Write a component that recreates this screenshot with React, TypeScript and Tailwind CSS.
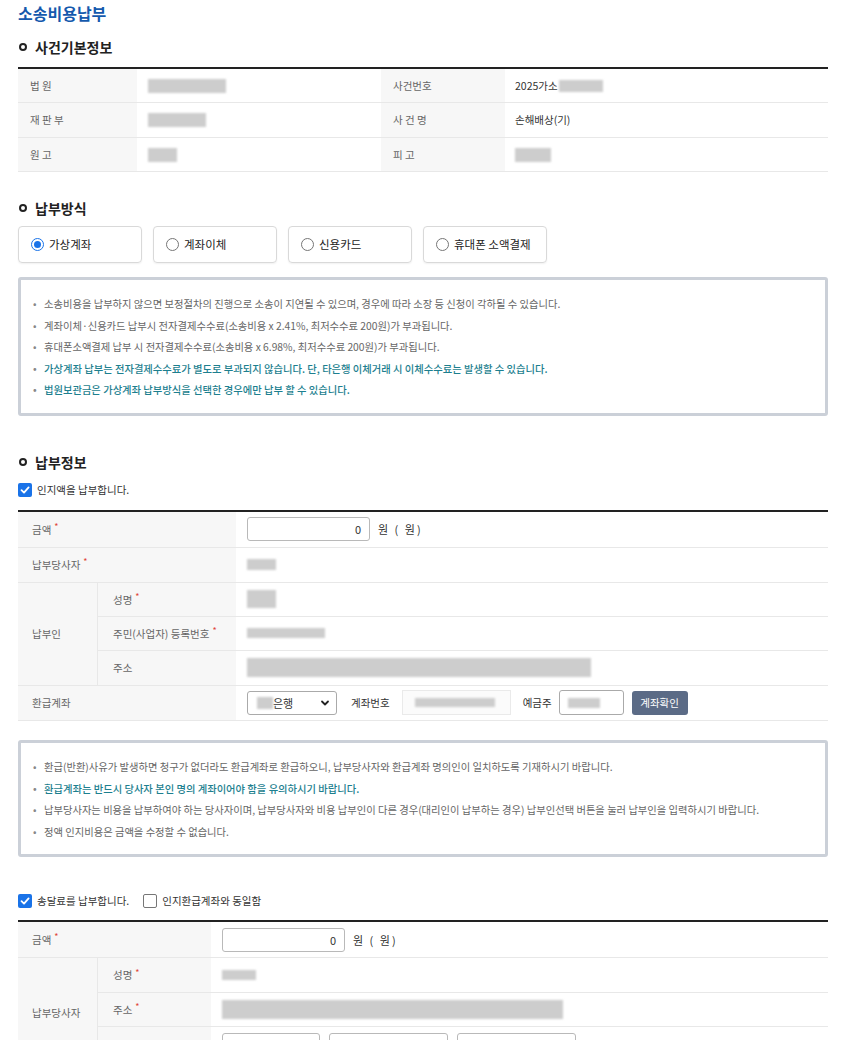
import React from "react";

const Blur = ({ w, h = 10, className = "" }: { w: number; h?: number; className?: string }) => (
  <span
    className={`inline-block bg-[#cdcdcd] blur-[1px] align-middle ${className}`}
    style={{ width: w, height: h }}
  />
);

const Heading = ({ children }: { children: React.ReactNode }) => (
  <h2 className="flex items-center gap-[8px] text-[14px] font-bold leading-[22px] text-[#222]">
    <span className="ml-[1px] h-[8px] w-[8px] rounded-full border-[2px] border-[#222]" />
    {children}
  </h2>
);

const Req = () => <span className="relative -top-[3px] ml-[3px] text-[9px] text-[#e0453a]">*</span>;

const Radio = ({ checked, label }: { checked?: boolean; label: string }) => (
  <label className="flex h-[37px] w-[124px] items-center gap-[5px] rounded-[4px] border border-[#d9d9d9] pl-[12px] text-[11.5px] text-[#222] shadow-[0_1px_2px_rgba(0,0,0,0.06)]">
    {checked ? (
      <span className="flex h-[13px] w-[13px] items-center justify-center rounded-full border border-[#1a73e8] bg-white">
        <span className="h-[7px] w-[7px] rounded-full bg-[#1a73e8]" />
      </span>
    ) : (
      <span className="h-[13px] w-[13px] rounded-full border border-[#767676] bg-white" />
    )}
    {label}
  </label>
);

const Check = ({ checked, label }: { checked?: boolean; label: string }) => (
  <label className="flex items-center gap-[5px] text-[10.5px] text-[#333]">
    {checked ? (
      <span className="flex h-[14px] w-[14px] items-center justify-center rounded-[2px] bg-[#1a73e8]">
        <svg width="10" height="10" viewBox="0 0 10 10" fill="none">
          <path d="M1.5 5.2 4 7.6 8.6 2.4" stroke="white" strokeWidth="1.8" strokeLinecap="round" strokeLinejoin="round" />
        </svg>
      </span>
    ) : (
      <span className="h-[14px] w-[14px] rounded-[2px] border border-[#767676] bg-white" />
    )}
    {label}
  </label>
);

const Notice = ({ lines }: { lines: { text: string; teal?: boolean }[] }) => (
  <div className="rounded-[3px] border-[3px] border-[#cbd0d8] pl-[12px] pt-[13px] pb-[12px]">
    {lines.map((l, i) => (
      <div
        key={i}
        className={`flex text-[10.3px] leading-[21.6px] ${l.teal ? "font-medium text-[#1d7f8f]" : "text-[#666]"}`}
      >
        <span className="w-[11px] text-[#888]">•</span>
        <span>{l.text}</span>
      </div>
    ))}
  </div>
);

const AmountInput = () => (
  <div className="flex items-center gap-[8px] text-[11px] text-[#333]">
    <div className="flex h-[24px] w-[123px] items-center justify-end rounded-[3px] border border-[#b9b9b9] pr-[8px] text-[11px]">
      0
    </div>
    <span className="tracking-[2px]">원 ( 원)</span>
  </div>
);

const lbl = "flex items-center border-b border-[#e8e8e8] bg-[#f7f7f7] text-[10.5px] text-[#666]";
const val = "flex items-center border-b border-[#e8e8e8] text-[10.5px] text-[#333]";

export default function App() {
  return (
    <div className="min-h-[1040px] w-[846px] bg-white px-[18px] pb-[40px] font-['Noto_Sans_CJK_KR','Noto_Sans',sans-serif]">
      <h1 className="pt-[1px] text-[16px] font-bold leading-[24px] text-[#1559ad]">소송비용납부</h1>

      <div className="mt-[11px]">
        <Heading>사건기본정보</Heading>
      </div>
      <div className="mt-[9px] border-t-[2px] border-[#222]">
        <div className="grid h-[34px] grid-cols-[119px_244px_124px_1fr]">
          <div className={`${lbl} pl-[12px]`}>법 원</div>
          <div className={`${val} pl-[11px]`}><Blur w={78} h={14} /></div>
          <div className={`${lbl} pl-[12px]`}>사건번호</div>
          <div className={`${val} pl-[10px]`}>2025가소<Blur w={44} h={12} className="ml-[1px]" /></div>
        </div>
        <div className="grid h-[35px] grid-cols-[119px_244px_124px_1fr]">
          <div className={`${lbl} pl-[12px]`}>재 판 부</div>
          <div className={`${val} pl-[11px]`}><Blur w={58} h={14} /></div>
          <div className={`${lbl} pl-[12px]`}>사 건 명</div>
          <div className={`${val} pl-[10px]`}>손해배상(기)</div>
        </div>
        <div className="grid h-[34px] grid-cols-[119px_244px_124px_1fr]">
          <div className={`${lbl} pl-[12px]`}>원 고</div>
          <div className={`${val} pl-[11px]`}><Blur w={29} h={14} /></div>
          <div className={`${lbl} pl-[12px]`}>피 고</div>
          <div className={`${val} pl-[10px]`}><Blur w={36} h={14} /></div>
        </div>
      </div>

      <div className="mt-[25px]">
        <Heading>납부방식</Heading>
      </div>
      <div className="mt-[7px] flex gap-[11px]">
        <Radio checked label="가상계좌" />
        <Radio label="계좌이체" />
        <Radio label="신용카드" />
        <Radio label="휴대폰 소액결제" />
      </div>

      <div className="mt-[14px]">
        <Notice
          lines={[
            { text: "소송비용을 납부하지 않으면 보정절차의 진행으로 소송이 지연될 수 있으며, 경우에 따라 소장 등 신청이 각하될 수 있습니다." },
            { text: "계좌이체·신용카드 납부시 전자결제수수료(소송비용 x 2.41%, 최저수수료 200원)가 부과됩니다." },
            { text: "휴대폰소액결제 납부 시 전자결제수수료(소송비용 x 6.98%, 최저수수료 200원)가 부과됩니다." },
            { text: "가상계좌 납부는 전자결제수수료가 별도로 부과되지 않습니다. 단, 타은행 이체거래 시 이체수수료는 발생할 수 있습니다.", teal: true },
            { text: "법원보관금은 가상계좌 납부방식을 선택한 경우에만 납부 할 수 있습니다.", teal: true },
          ]}
        />
      </div>

      <div className="mt-[35px]">
        <Heading>납부정보</Heading>
      </div>
      <div className="mt-[8px] flex h-[18px] items-center">
        <Check checked label="인지액을 납부합니다." />
      </div>

      <div className="mt-[11px] grid grid-cols-[80px_138px_1fr] grid-rows-[36px_35px_34px_34px_35px_35px] border-t-[2px] border-[#222]">
        <div className={`${lbl} col-span-2 pl-[14px]`}>금액<Req /></div>
        <div className={`${val} pl-[11px]`}><AmountInput /></div>

        <div className={`${lbl} col-span-2 pl-[14px]`}>납부당사자<Req /></div>
        <div className={`${val} pl-[11px]`}><Blur w={29} h={11} /></div>

        <div className={`${lbl} row-span-3 border-r pl-[14px]`}>납부인</div>
        <div className={`${lbl} pl-[15px]`}>성명<Req /></div>
        <div className={`${val} pl-[11px]`}><Blur w={29} h={18} /></div>
        <div className={`${lbl} pl-[15px]`}>주민(사업자) 등록번호<Req /></div>
        <div className={`${val} pl-[11px]`}><Blur w={78} h={10} /></div>
        <div className={`${lbl} pl-[15px]`}>주소</div>
        <div className={`${val} pl-[11px]`}><Blur w={344} h={19} /></div>

        <div className={`${lbl} col-span-2 pl-[14px]`}>환급계좌</div>
        <div className={`${val} gap-[14px] pl-[11px]`}>
          <div className="flex h-[24px] w-[90px] items-center rounded-[3px] border border-[#aaa] pl-[9px] pr-[6px]">
            <Blur w={16} h={12} />
            <span className="text-[11px]">은행</span>
            <svg className="ml-auto" width="10" height="10" viewBox="0 0 10 10" fill="none">
              <path d="M2 3.5 5 6.5 8 3.5" stroke="#222" strokeWidth="1.8" strokeLinecap="round" strokeLinejoin="round" />
            </svg>
          </div>
          <span className="text-[10.5px]">계좌번호</span>
          <div className="-ml-[2px] flex h-[25px] w-[109px] items-center border border-[#eaeaea] bg-[#fbfbfb] pl-[12px]">
            <Blur w={80} h={9} />
          </div>
          <span className="-ml-[2px] text-[10.5px]">예금주</span>
          <div className="-ml-[7px] flex h-[25px] w-[65px] items-center rounded-[3px] border border-[#aaa] pl-[8px]">
            <Blur w={32} h={10} />
          </div>
          <button className="-ml-[6px] h-[24px] w-[56px] rounded-[3px] bg-[#5b6b86] text-[10.5px] text-white">계좌확인</button>
        </div>
      </div>

      <div className="mt-[19px]">
        <Notice
          lines={[
            { text: "환급(반환)사유가 발생하면 청구가 없더라도 환급계좌로 환급하오니, 납부당사자와 환급계좌 명의인이 일치하도록 기재하시기 바랍니다." },
            { text: "환급계좌는 반드시 당사자 본인 명의 계좌이어야 함을 유의하시기 바랍니다.", teal: true },
            { text: "납부당사자는 비용을 납부하여야 하는 당사자이며, 납부당사자와 비용 납부인이 다른 경우(대리인이 납부하는 경우) 납부인선택 버튼을 눌러 납부인을 입력하시기 바랍니다." },
            { text: "정액 인지비용은 금액을 수정할 수 없습니다." },
          ]}
        />
      </div>

      <div className="mt-[35px] flex h-[18px] items-center gap-[14px]">
        <Check checked label="송달료를 납부합니다." />
        <Check label="인지환급계좌와 동일함" />
      </div>

      <div className="mt-[10px] grid grid-cols-[80px_113px_1fr] grid-rows-[36px_35px_34px_41px] border-t-[2px] border-[#222]">
        <div className={`${lbl} col-span-2 pl-[14px]`}>금액<Req /></div>
        <div className={`${val} pl-[11px]`}><AmountInput /></div>

        <div className={`${lbl} row-span-3 border-r pl-[14px]`}>납부당사자</div>
        <div className={`${lbl} pl-[15px]`}>성명<Req /></div>
        <div className={`${val} pl-[11px]`}><Blur w={34} h={10} /></div>
        <div className={`${lbl} pl-[15px]`}>주소<Req /></div>
        <div className={`${val} pl-[11px]`}><Blur w={341} h={19} /></div>
        <div className={lbl} />
        <div className={`${val} items-start gap-[9px] pl-[11px] pt-[6px]`}>
          <div className="h-[24px] w-[98px] rounded-[3px] border border-[#b9b9b9]" />
          <div className="h-[24px] w-[119px] rounded-[3px] border border-[#b9b9b9]" />
          <div className="h-[24px] w-[119px] rounded-[3px] border border-[#b9b9b9]" />
        </div>
      </div>
    </div>
  );
}
